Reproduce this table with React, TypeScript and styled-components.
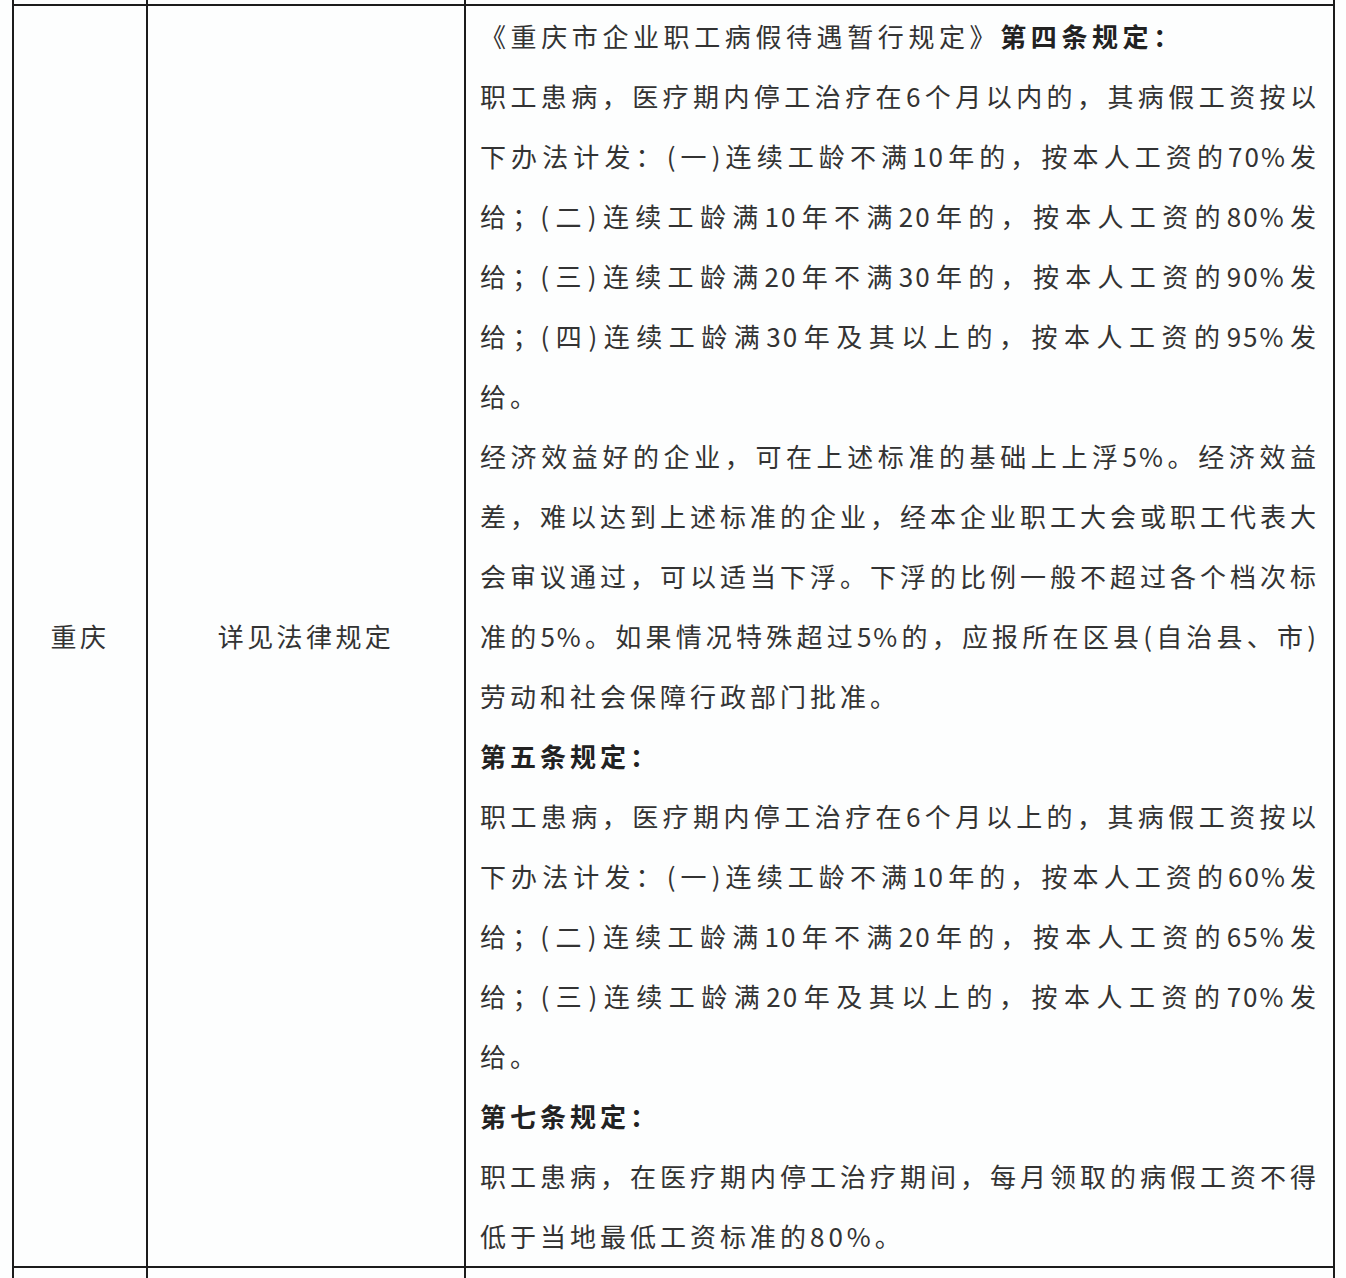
import React from 'react'
import styled, { createGlobalStyle } from 'styled-components'

const GlobalStyle = createGlobalStyle`
  html,
  body {
    margin: 0;
    padding: 0;
    background: #fdfefe;
  }
  body {
    font-family: "Noto Sans CJK SC", "Noto Sans", sans-serif;
    color: #333333;
  }
`

const Page = styled.div`
  width: 1346px;
  height: 1278px;
  overflow: hidden;
  padding-left: 12px;
  box-sizing: border-box;
`

const Table = styled.table`
  border-collapse: collapse;
  table-layout: fixed;
  width: 1323px;
  background: #fdfefe;
`

const Cell = styled.td`
  border: 2px solid #1c1c1c;
  padding: 0;
`

const TailCell = styled(Cell)`
  border-top: none;
  height: 4px;
`

const NextCell = styled(Cell)`
  border-bottom: none;
  height: 20px;
`

const NameCell = styled(Cell)`
  text-align: center;
  vertical-align: middle;
  font-size: 26px;
  letter-spacing: 3.4px;
  line-height: 60px;
`

const RuleCell = styled(Cell)`
  padding: 0 15px 0 14px;
  vertical-align: top;
  font-size: 26px;
  line-height: 60px;
`

const Para = styled.p`
  margin: 0;
`

// justified lines spread to the cell width; the closing line of a paragraph keeps its own spacing
const Line = styled.span<{ $last?: boolean; $spacing?: number }>`
  display: block;
  white-space: nowrap;
  text-align: justify;
  text-align-last: ${p => (p.$last ? 'left' : 'justify')};
  letter-spacing: ${p => p.$spacing ?? (p.$last ? 4 : 2)}px;
`

const Strong = styled.strong`
  font-weight: 700;
  color: #222222;
`

type Block = { lines: string[]; bold?: boolean }

const ARTICLE_FOUR: Block[] = [
  {
    lines: [
      '职工患病，医疗期内停工治疗在6个月以内的，其病假工资按以',
      '下办法计发：(一)连续工龄不满10年的，按本人工资的70%发',
      '给；(二)连续工龄满10年不满20年的，按本人工资的80%发',
      '给；(三)连续工龄满20年不满30年的，按本人工资的90%发',
      '给；(四)连续工龄满30年及其以上的，按本人工资的95%发',
      '给。'
    ]
  },
  {
    lines: [
      '经济效益好的企业，可在上述标准的基础上上浮5%。经济效益',
      '差，难以达到上述标准的企业，经本企业职工大会或职工代表大',
      '会审议通过，可以适当下浮。下浮的比例一般不超过各个档次标',
      '准的5%。如果情况特殊超过5%的，应报所在区县(自治县、市)',
      '劳动和社会保障行政部门批准。'
    ]
  },
  { lines: ['第五条规定：'], bold: true },
  {
    lines: [
      '职工患病，医疗期内停工治疗在6个月以上的，其病假工资按以',
      '下办法计发：(一)连续工龄不满10年的，按本人工资的60%发',
      '给；(二)连续工龄满10年不满20年的，按本人工资的65%发',
      '给；(三)连续工龄满20年及其以上的，按本人工资的70%发',
      '给。'
    ]
  },
  { lines: ['第七条规定：'], bold: true },
  {
    lines: [
      '职工患病，在医疗期内停工治疗期间，每月领取的病假工资不得',
      '低于当地最低工资标准的80%。'
    ]
  }
]

function RuleText() {
  return (
    <>
      <Para>
        <Line $last $spacing={4.6}>
          《重庆市企业职工病假待遇暂行规定》<Strong>第四条规定：</Strong>
        </Line>
      </Para>
      {ARTICLE_FOUR.map((block, i) => (
        <Para key={i}>
          {block.lines.map((text, j) => (
            <Line key={j} $last={j === block.lines.length - 1}>
              {block.bold ? <Strong>{text}</Strong> : text}
            </Line>
          ))}
        </Para>
      ))}
    </>
  )
}

export default function App() {
  return (
    <>
      <GlobalStyle />
      <Page>
        <Table>
          <colgroup>
            <col style={{ width: 134 }} />
            <col style={{ width: 318 }} />
            <col style={{ width: 869 }} />
          </colgroup>
          <tbody>
            <tr>
              <TailCell />
              <TailCell />
              <TailCell />
            </tr>
            <tr>
              <NameCell>重庆</NameCell>
              <NameCell>详见法律规定</NameCell>
              <RuleCell>
                <RuleText />
              </RuleCell>
            </tr>
            <tr>
              <NextCell />
              <NextCell />
              <NextCell />
            </tr>
          </tbody>
        </Table>
      </Page>
    </>
  )
}
